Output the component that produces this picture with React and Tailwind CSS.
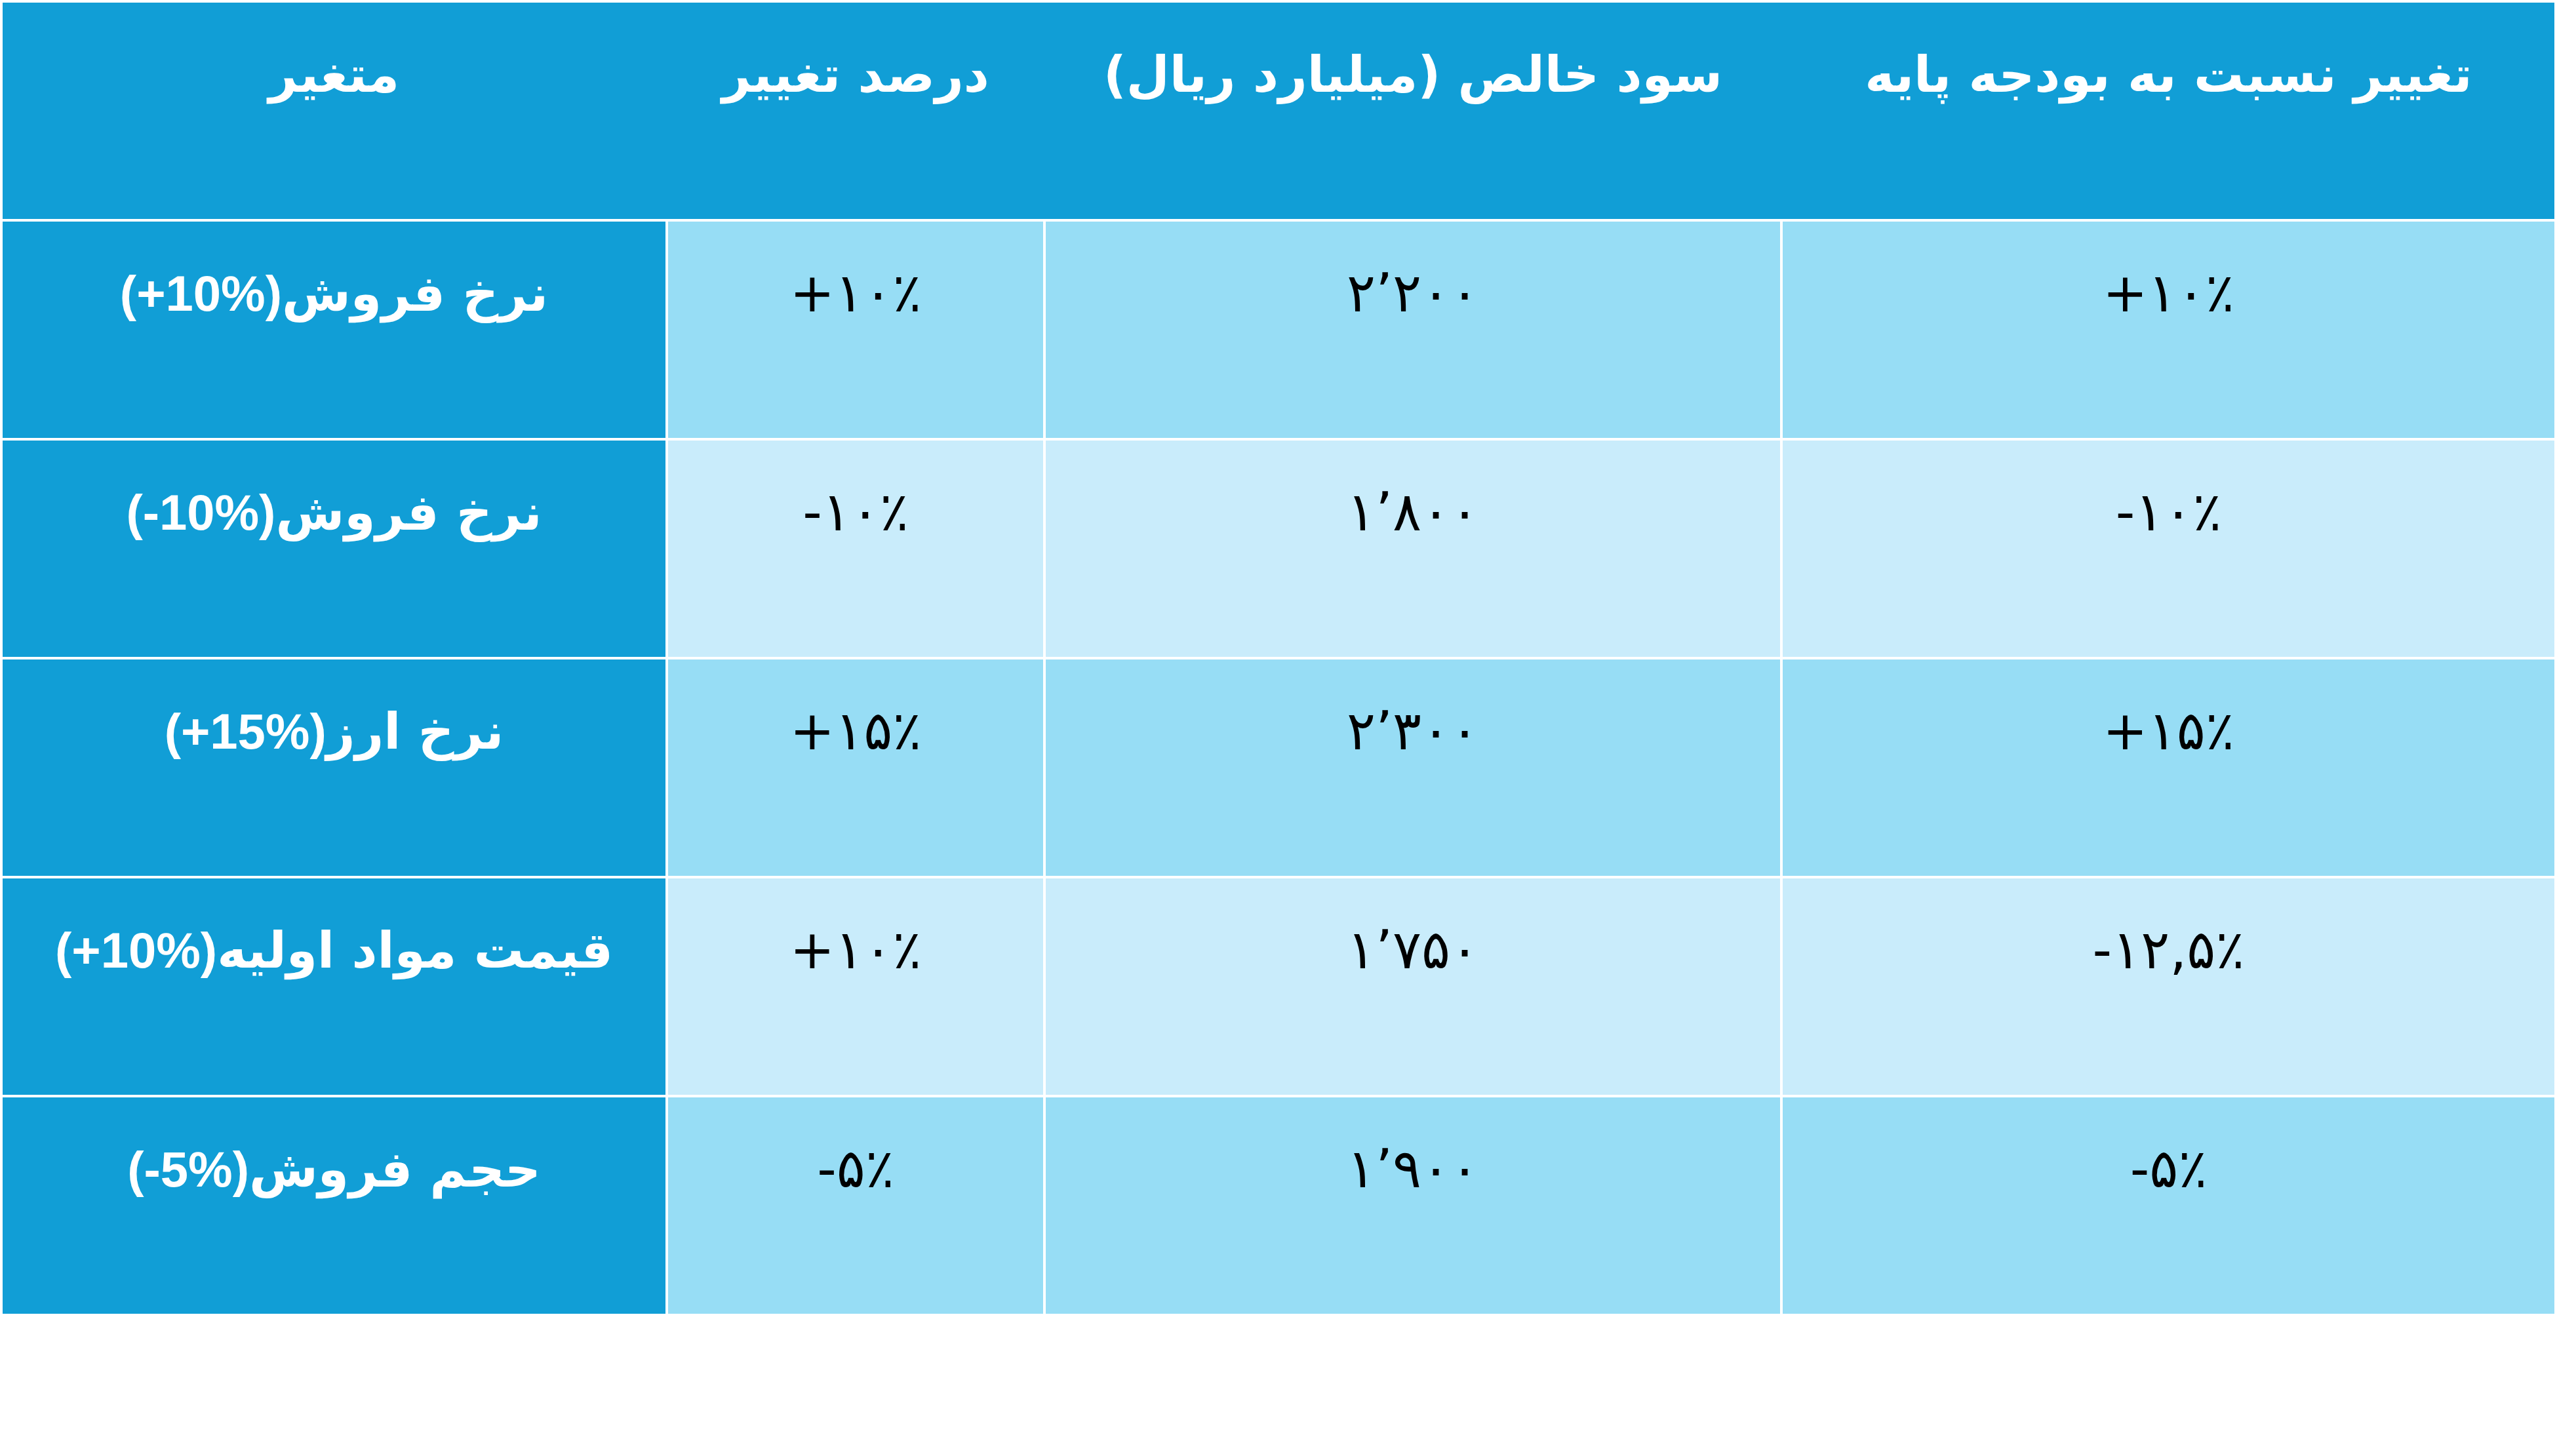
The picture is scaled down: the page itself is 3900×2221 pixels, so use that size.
const rows = [
  { name: 'نرخ فروش', delta: '(+10%)', pct: '+۱۰٪', profit: '۲٬۲۰۰', base: '+۱۰٪', tone: 'bg-[#97ddf5]' },
  { name: 'نرخ فروش', delta: '(-10%)', pct: '-۱۰٪', profit: '۱٬۸۰۰', base: '-۱۰٪', tone: 'bg-[#c9ecfb]' },
  { name: 'نرخ ارز', delta: '(+15%)', pct: '+۱۵٪', profit: '۲٬۳۰۰', base: '+۱۵٪', tone: 'bg-[#97ddf5]' },
  { name: 'قیمت مواد اولیه', delta: '(+10%)', pct: '+۱۰٪', profit: '۱٬۷۵۰', base: '-۱۲,۵٪', tone: 'bg-[#c9ecfb]' },
  { name: 'حجم فروش', delta: '(-5%)', pct: '-۵٪', profit: '۱٬۹۰۰', base: '-۵٪', tone: 'bg-[#97ddf5]' },
];

const headers = ['متغیر', 'درصد تغییر', 'سود خالص (میلیارد ریال)', 'تغییر نسبت به بودجه پایه'];

const cols = 'grid grid-cols-[1011px_572px_1120px_1177px] gap-x-[4px]';

export default function App() {
  return (
    <div className="w-[3900px] h-[2221px] bg-white font-['DejaVu_Sans',sans-serif]">
      <div className="flex flex-col gap-[4px] p-[4px] w-[3900px]">
        {/* header band, no dividers */}
        <div className={`${cols} bg-[#119ed6] h-[330px]`}>
          {headers.map((h) => (
            <div key={h} dir="rtl" className="text-center text-white font-bold text-[76px] leading-none pt-[72px]">
              {h}
            </div>
          ))}
        </div>

        {rows.map((r, i) => (
          <div key={i} className={`${cols} h-[330px]`}>
            <div dir="rtl" className="bg-[#119ed6] text-center text-white font-bold text-[76px] leading-none pt-[72px]">
              {r.name}
              <span dir="ltr" className="font-['Liberation_Sans',sans-serif] tracking-[-0.06em]">
                {r.delta}
              </span>
            </div>
            <div dir="ltr" className={`${r.tone} text-center text-black text-[82px] leading-none pt-[68px]`}>
              {r.pct}
            </div>
            <div dir="ltr" className={`${r.tone} text-center text-black text-[82px] leading-none pt-[68px]`}>
              {r.profit}
            </div>
            <div dir="ltr" className={`${r.tone} text-center text-black text-[82px] leading-none pt-[68px]`}>
              {r.base}
            </div>
          </div>
        ))}
      </div>
    </div>
  );
}
